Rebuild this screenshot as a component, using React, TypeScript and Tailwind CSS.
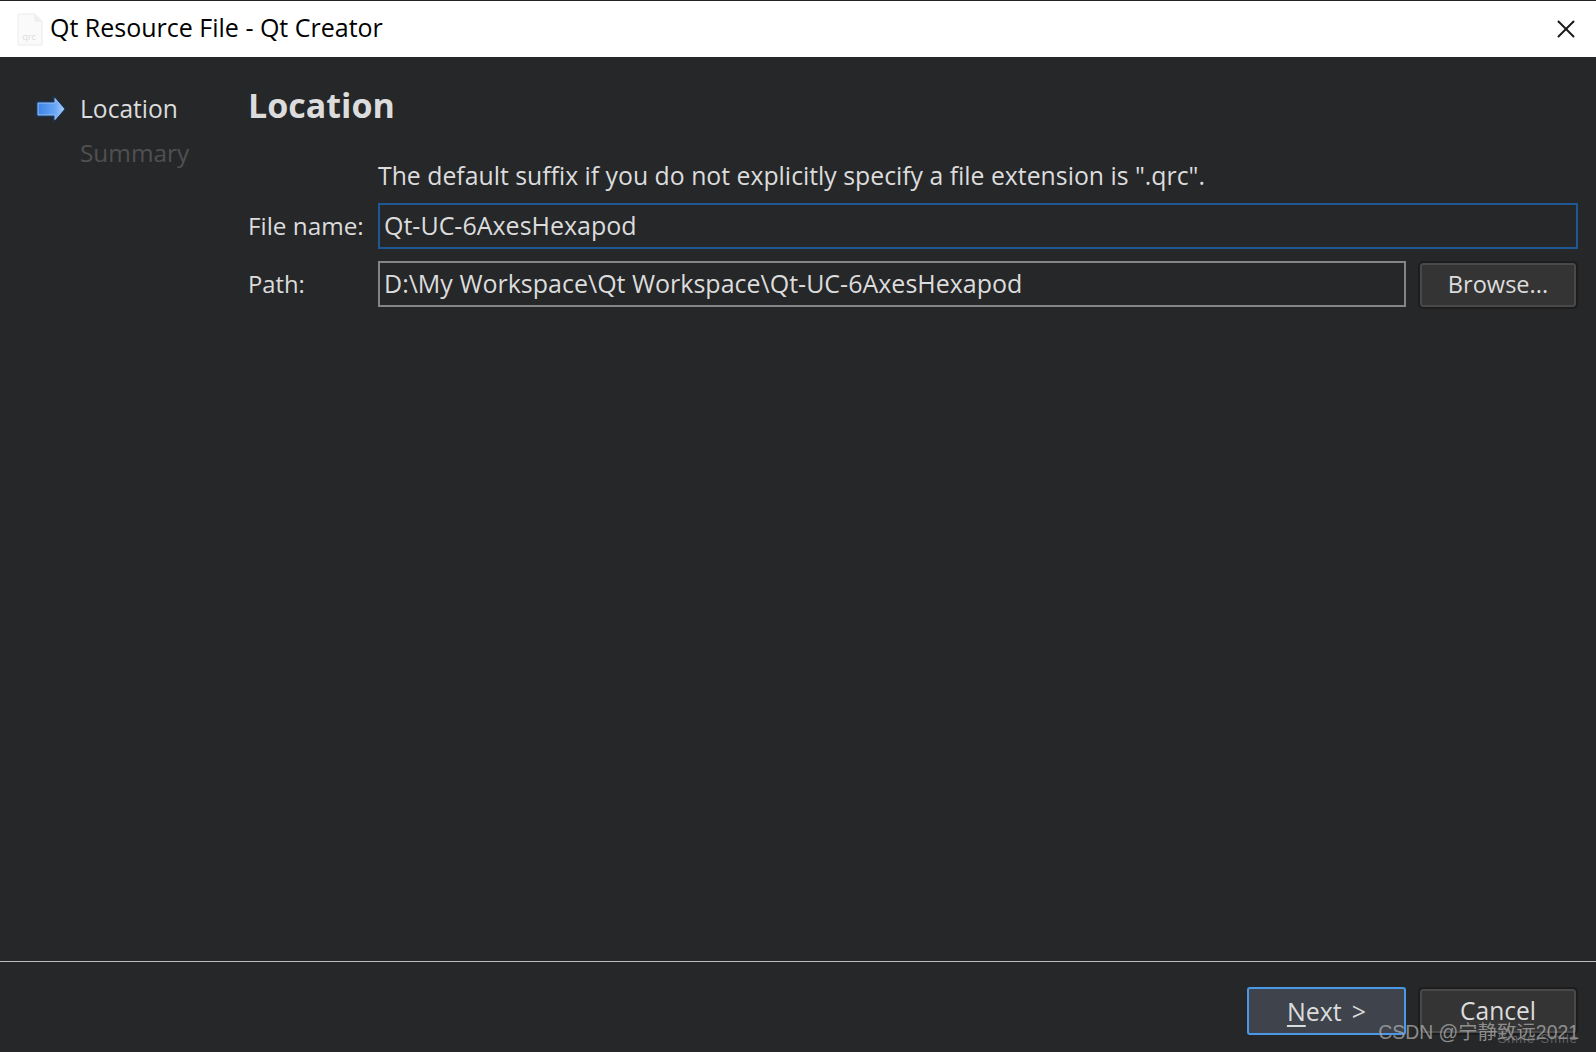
import { X } from 'lucide-react';

const font = "font-['Open_Sans','Noto_Sans',sans-serif]";

function ArrowIcon() {
  return (
    <svg width="30" height="28" viewBox="0 0 30 28" className="shrink-0">
      <defs>
        <linearGradient id="arrowFill" x1="0" y1="0" x2="1" y2="0">
          <stop offset="0" stopColor="#3f83e6" />
          <stop offset="0.65" stopColor="#67a6f6" />
          <stop offset="1" stopColor="#a9cdf8" />
        </linearGradient>
      </defs>
      <path d="M0 6h17V0l13 14-13 14v-6H0z" fill="#153a68" opacity="0.85" />
      <path d="M2 8h17V3.500L28 14l-9 10.500V20H2z" fill="url(#arrowFill)" stroke="#9cc4f5" strokeWidth="1" />
    </svg>
  );
}

function FileIcon() {
  return (
    <svg width="26" height="33" viewBox="0 0 26 33" className="shrink-0">
      <path d="M1 1h17l7 7v24H1z" fill="#fafafa" stroke="#ececec" />
      <path d="M18 1v7h7" fill="#f1f1f1" stroke="#ececec" />
      <text x="12" y="27" textAnchor="middle" fontSize="9" fill="#dcdcdc" fontFamily="Open Sans">qrc</text>
    </svg>
  );
}

function DialogButton({ children, primary }: { children: React.ReactNode; primary?: boolean }) {
  return (
    <button
      className={
        primary
          ? 'w-[159px] h-[48px] rounded-[3px] border-2 border-[#4a98e6] bg-[#3e434c] text-[#dcdcdc] leading-none'
          : 'w-[156px] h-[44px] rounded-[3px] border-2 border-[#49494a] bg-[#343434] outline-2 outline-[#1d1d1e] text-[#dcdcdc] leading-none'
      }
    >
      {children}
    </button>
  );
}

export default function App() {
  return (
    <div className={`${font} relative w-[1596px] h-[1052px] overflow-hidden flex flex-col bg-[#262729] text-[#dcdcdc]`}>
      {/* Title bar */}
      <div className="h-[57px] shrink-0 bg-white border-t border-[#222] flex items-center pl-[17px] pr-[15px] text-black">
        <FileIcon />
        <span className="ml-[7px] mb-[3px] text-[25px] leading-none flex-1">Qt Resource File - Qt Creator</span>
        <X className="w-[30px] h-[30px] text-[#1a1a1a]" strokeWidth={1.6} />
      </div>

      <div className="flex-1 flex min-h-0">
        {/* Steps */}
        <div className="w-[248px] shrink-0 pl-[36px] pt-[38px]">
          <div className="flex items-center h-[28px]">
            <ArrowIcon />
            <span className="ml-[14px] text-[24.6px] leading-none">Location</span>
          </div>
          <div className="mt-[16px] pl-[44px] text-[24.4px] leading-[28px] text-[#505052]">Summary</div>
        </div>

        {/* Page */}
        <div className="flex-1 pr-[18px] pt-[28px]">
          <h1 className="text-[34px] leading-[40px] font-bold text-[#dcdcdc]">Location</h1>
          <p className="ml-[130px] mt-[34px] text-[24.8px] leading-[32px]">
            The default suffix if you do not explicitly specify a file extension is ".qrc".
          </p>
          <div className="mt-[12px] flex items-center gap-[14px]">
            <span className="w-[116px] text-[24.3px] leading-none">File name:</span>
            <div className="flex-1 h-[46px] border-2 border-[#1f5795] flex items-center pl-[4px] text-[25px]">
              Qt-UC-6AxesHexapod
            </div>
          </div>
          <div className="mt-[12px] flex items-center gap-[14px]">
            <span className="w-[116px] pt-[2px] text-[23.8px] leading-none">Path:</span>
            <div className="flex-1 h-[46px] border-2 border-[#858585] flex items-center pl-[4px] text-[25px]">
              D:\My Workspace\Qt Workspace\Qt-UC-6AxesHexapod
            </div>
            <div className="pr-[2px] pt-[1px]">
              <DialogButton><span className="block pt-[1px] text-[23.6px]">Browse...</span></DialogButton>
            </div>
          </div>
        </div>
      </div>

      {/* Footer */}
      <div className="h-[91px] shrink-0 border-t border-[#bdbdbd] flex items-start justify-end gap-[14px] pr-[20px] pt-[25px]">
        <DialogButton primary>
          <span className="text-[25px]">
            <span className="underline decoration-2 underline-offset-4">N</span>ext<span className="ml-[10px]">&gt;</span>
          </span>
        </DialogButton>
        <div className="pt-[2px]">
          <DialogButton><span className="text-[24.6px]">Cancel</span></DialogButton>
        </div>
      </div>

      {/* Watermark */}
      <div className="absolute right-[17px] bottom-[10px] text-[19.4px] leading-none text-[#a8a8a8]/80 font-['Liberation_Sans','Noto_Sans_CJK_SC',sans-serif]">
        CSDN @宁静致远2021
      </div>
      <div className="absolute right-[18px] bottom-[7px] text-[13px] leading-none tracking-[1px] text-[#8a8a8a]/60 font-['Liberation_Sans',sans-serif]">
        Smile-Smile
      </div>
    </div>
  );
}
